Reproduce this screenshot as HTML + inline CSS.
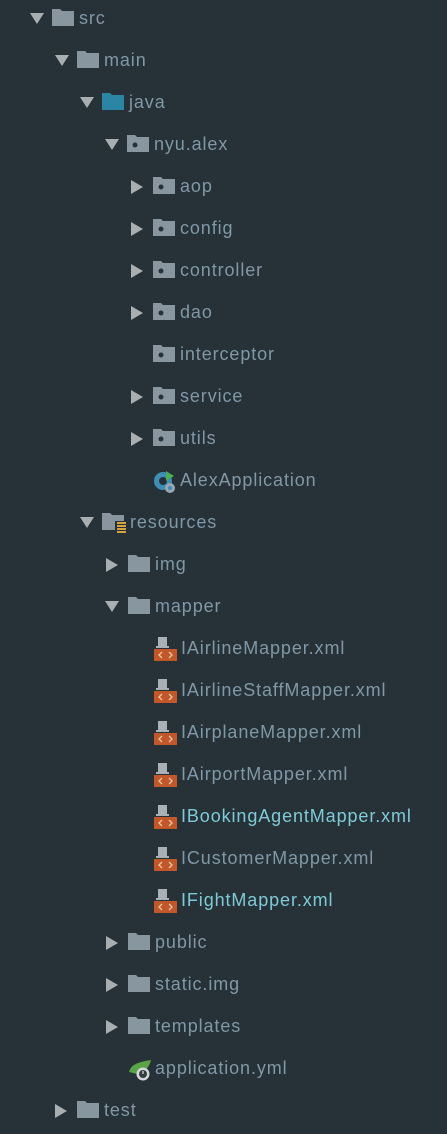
<!DOCTYPE html>
<html><head><meta charset="utf-8"><style>
html,body{margin:0;padding:0}
body{width:447px;height:1131px;background:#263238;position:relative;overflow:hidden;font-family:"Liberation Sans","DejaVu Sans",sans-serif;font-size:18px;letter-spacing:0.9px;color:#8198a6}
.r{position:absolute;left:0;height:42px;width:447px}
.a{position:absolute;top:13px;width:0;height:0}
.dn{border-left:7px solid transparent;border-right:7px solid transparent;border-top:11px solid #a9aeb1}
.rt{top:12px;border-top:7px solid transparent;border-bottom:7px solid transparent;border-left:12px solid #a9aeb1}
.f{position:absolute;top:9px;width:22px;height:17px}
.t{position:absolute;top:7px;line-height:22px;white-space:nowrap}
.hl{color:#7fcbd5}
</style></head><body>

<div class="r" style="top:0"><div class="a dn" style="left:30px"></div><svg class="f" style="left:52px" viewBox="0 0 22 17"><path d="M0 0H8L10 2H22V17H0Z" fill="#88969f"/></svg><span class="t" style="left:79px">src</span></div>
<div class="r" style="top:42px"><div class="a dn" style="left:55px"></div><svg class="f" style="left:77px" viewBox="0 0 22 17"><path d="M0 0H8L10 2H22V17H0Z" fill="#88969f"/></svg><span class="t" style="left:104px">main</span></div>
<div class="r" style="top:84px"><div class="a dn" style="left:80px"></div><svg class="f" style="left:102px" viewBox="0 0 22 17"><path d="M0 0H8L10 2H22V17H0Z" fill="#2b86a6"/></svg><span class="t" style="left:129px">java</span></div>
<div class="r" style="top:126px"><div class="a dn" style="left:105px"></div><svg class="f" style="left:127px" viewBox="0 0 22 17"><path d="M0 0H8L10 2H22V17H0Z" fill="#88969f"/><circle cx="8" cy="10" r="2.5" fill="#263238"/></svg><span class="t" style="left:154px">nyu.alex</span></div>
<div class="r" style="top:168px"><div class="a rt" style="left:131px"></div><svg class="f" style="left:153px" viewBox="0 0 22 17"><path d="M0 0H8L10 2H22V17H0Z" fill="#88969f"/><circle cx="8" cy="10" r="2.5" fill="#263238"/></svg><span class="t" style="left:180px">aop</span></div>
<div class="r" style="top:210px"><div class="a rt" style="left:131px"></div><svg class="f" style="left:153px" viewBox="0 0 22 17"><path d="M0 0H8L10 2H22V17H0Z" fill="#88969f"/><circle cx="8" cy="10" r="2.5" fill="#263238"/></svg><span class="t" style="left:180px">config</span></div>
<div class="r" style="top:252px"><div class="a rt" style="left:131px"></div><svg class="f" style="left:153px" viewBox="0 0 22 17"><path d="M0 0H8L10 2H22V17H0Z" fill="#88969f"/><circle cx="8" cy="10" r="2.5" fill="#263238"/></svg><span class="t" style="left:180px">controller</span></div>
<div class="r" style="top:294px"><div class="a rt" style="left:131px"></div><svg class="f" style="left:153px" viewBox="0 0 22 17"><path d="M0 0H8L10 2H22V17H0Z" fill="#88969f"/><circle cx="8" cy="10" r="2.5" fill="#263238"/></svg><span class="t" style="left:180px">dao</span></div>
<div class="r" style="top:336px"><svg class="f" style="left:153px" viewBox="0 0 22 17"><path d="M0 0H8L10 2H22V17H0Z" fill="#88969f"/><circle cx="8" cy="10" r="2.5" fill="#263238"/></svg><span class="t" style="left:180px">interceptor</span></div>
<div class="r" style="top:378px"><div class="a rt" style="left:131px"></div><svg class="f" style="left:153px" viewBox="0 0 22 17"><path d="M0 0H8L10 2H22V17H0Z" fill="#88969f"/><circle cx="8" cy="10" r="2.5" fill="#263238"/></svg><span class="t" style="left:180px">service</span></div>
<div class="r" style="top:420px"><div class="a rt" style="left:131px"></div><svg class="f" style="left:153px" viewBox="0 0 22 17"><path d="M0 0H8L10 2H22V17H0Z" fill="#88969f"/><circle cx="8" cy="10" r="2.5" fill="#263238"/></svg><span class="t" style="left:180px">utils</span></div>
<div class="r" style="top:462px"><svg style="position:absolute;left:153px;top:8px" width="26" height="24" viewBox="0 0 26 24"><circle cx="10" cy="11" r="9" fill="#3d8fb5"/><circle cx="10" cy="11" r="4" fill="#263238"/><path d="M13 1L21 6L13 11Z" fill="#4caf50"/><circle cx="17" cy="18" r="5" fill="#9aa7b0"/><circle cx="17" cy="18" r="2" fill="#3d8fb5"/></svg><span class="t" style="left:180px">AlexApplication</span></div>
<div class="r" style="top:504px"><div class="a dn" style="left:80px"></div><svg style="position:absolute;left:102px;top:9px" width="26" height="22" viewBox="0 0 26 22"><path d="M0 0H8L10 2H22V17H0Z" fill="#88969f"/><rect x="13" y="8" width="12" height="13" fill="#263238"/><rect x="15" y="9" width="9" height="2" fill="#d9a33b"/><rect x="15" y="12" width="9" height="2" fill="#d9a33b"/><rect x="15" y="15" width="9" height="2" fill="#d9a33b"/><rect x="15" y="18" width="9" height="2" fill="#d9a33b"/></svg><span class="t" style="left:130px">resources</span></div>
<div class="r" style="top:546px"><div class="a rt" style="left:106px"></div><svg class="f" style="left:128px" viewBox="0 0 22 17"><path d="M0 0H8L10 2H22V17H0Z" fill="#88969f"/></svg><span class="t" style="left:155px">img</span></div>
<div class="r" style="top:588px"><div class="a dn" style="left:105px"></div><svg class="f" style="left:128px" viewBox="0 0 22 17"><path d="M0 0H8L10 2H22V17H0Z" fill="#88969f"/></svg><span class="t" style="left:155px">mapper</span></div>

<div class="r" style="top:630px"><svg style="position:absolute;left:154px;top:7px" width="23" height="24" viewBox="0 0 23 24"><path d="M4 0H13V10H4V4Z" fill="#a9b1b6"/><path d="M2 10H15" stroke="#a9b1b6" stroke-width="2"/><rect x="0" y="12" width="23" height="12" fill="#c2572a"/><path d="M8 15L5 18L8 21M15 15L18 18L15 21" stroke="#f0c8a8" stroke-width="1.3" fill="none"/></svg><span class="t" style="left:181px">IAirlineMapper.xml</span></div>
<div class="r" style="top:672px"><svg style="position:absolute;left:154px;top:7px" width="23" height="24" viewBox="0 0 23 24"><path d="M4 0H13V10H4V4Z" fill="#a9b1b6"/><path d="M2 10H15" stroke="#a9b1b6" stroke-width="2"/><rect x="0" y="12" width="23" height="12" fill="#c2572a"/><path d="M8 15L5 18L8 21M15 15L18 18L15 21" stroke="#f0c8a8" stroke-width="1.3" fill="none"/></svg><span class="t" style="left:181px">IAirlineStaffMapper.xml</span></div>
<div class="r" style="top:714px"><svg style="position:absolute;left:154px;top:7px" width="23" height="24" viewBox="0 0 23 24"><path d="M4 0H13V10H4V4Z" fill="#a9b1b6"/><path d="M2 10H15" stroke="#a9b1b6" stroke-width="2"/><rect x="0" y="12" width="23" height="12" fill="#c2572a"/><path d="M8 15L5 18L8 21M15 15L18 18L15 21" stroke="#f0c8a8" stroke-width="1.3" fill="none"/></svg><span class="t" style="left:181px">IAirplaneMapper.xml</span></div>
<div class="r" style="top:756px"><svg style="position:absolute;left:154px;top:7px" width="23" height="24" viewBox="0 0 23 24"><path d="M4 0H13V10H4V4Z" fill="#a9b1b6"/><path d="M2 10H15" stroke="#a9b1b6" stroke-width="2"/><rect x="0" y="12" width="23" height="12" fill="#c2572a"/><path d="M8 15L5 18L8 21M15 15L18 18L15 21" stroke="#f0c8a8" stroke-width="1.3" fill="none"/></svg><span class="t" style="left:181px">IAirportMapper.xml</span></div>
<div class="r" style="top:798px"><svg style="position:absolute;left:154px;top:7px" width="23" height="24" viewBox="0 0 23 24"><path d="M4 0H13V10H4V4Z" fill="#a9b1b6"/><path d="M2 10H15" stroke="#a9b1b6" stroke-width="2"/><rect x="0" y="12" width="23" height="12" fill="#c2572a"/><path d="M8 15L5 18L8 21M15 15L18 18L15 21" stroke="#f0c8a8" stroke-width="1.3" fill="none"/></svg><span class="t hl" style="left:181px">IBookingAgentMapper.xml</span></div>
<div class="r" style="top:840px"><svg style="position:absolute;left:154px;top:7px" width="23" height="24" viewBox="0 0 23 24"><path d="M4 0H13V10H4V4Z" fill="#a9b1b6"/><path d="M2 10H15" stroke="#a9b1b6" stroke-width="2"/><rect x="0" y="12" width="23" height="12" fill="#c2572a"/><path d="M8 15L5 18L8 21M15 15L18 18L15 21" stroke="#f0c8a8" stroke-width="1.3" fill="none"/></svg><span class="t" style="left:181px">ICustomerMapper.xml</span></div>
<div class="r" style="top:882px"><svg style="position:absolute;left:154px;top:7px" width="23" height="24" viewBox="0 0 23 24"><path d="M4 0H13V10H4V4Z" fill="#a9b1b6"/><path d="M2 10H15" stroke="#a9b1b6" stroke-width="2"/><rect x="0" y="12" width="23" height="12" fill="#c2572a"/><path d="M8 15L5 18L8 21M15 15L18 18L15 21" stroke="#f0c8a8" stroke-width="1.3" fill="none"/></svg><span class="t hl" style="left:181px">IFightMapper.xml</span></div>

<div class="r" style="top:924px"><div class="a rt" style="left:106px"></div><svg class="f" style="left:128px" viewBox="0 0 22 17"><path d="M0 0H8L10 2H22V17H0Z" fill="#88969f"/></svg><span class="t" style="left:155px">public</span></div>
<div class="r" style="top:966px"><div class="a rt" style="left:106px"></div><svg class="f" style="left:128px" viewBox="0 0 22 17"><path d="M0 0H8L10 2H22V17H0Z" fill="#88969f"/></svg><span class="t" style="left:155px">static.img</span></div>
<div class="r" style="top:1008px"><div class="a rt" style="left:106px"></div><svg class="f" style="left:128px" viewBox="0 0 22 17"><path d="M0 0H8L10 2H22V17H0Z" fill="#88969f"/></svg><span class="t" style="left:155px">templates</span></div>
<div class="r" style="top:1050px"><svg style="position:absolute;left:127px;top:8px" width="26" height="24" viewBox="0 0 26 24"><path d="M2 14C4 6 12 4 24 2C22 10 18 14 10 16Z" fill="#5aa346"/><circle cx="16" cy="16" r="6.5" fill="#d4d8da"/><circle cx="16" cy="16" r="4" fill="#33403f"/><path d="M16 13V16" stroke="#d4d8da" stroke-width="1.3"/></svg><span class="t" style="left:155px">application.yml</span></div>
<div class="r" style="top:1092px"><div class="a rt" style="left:55px"></div><svg class="f" style="left:77px" viewBox="0 0 22 17"><path d="M0 0H8L10 2H22V17H0Z" fill="#88969f"/></svg><span class="t" style="left:104px">test</span></div>
</body></html>
